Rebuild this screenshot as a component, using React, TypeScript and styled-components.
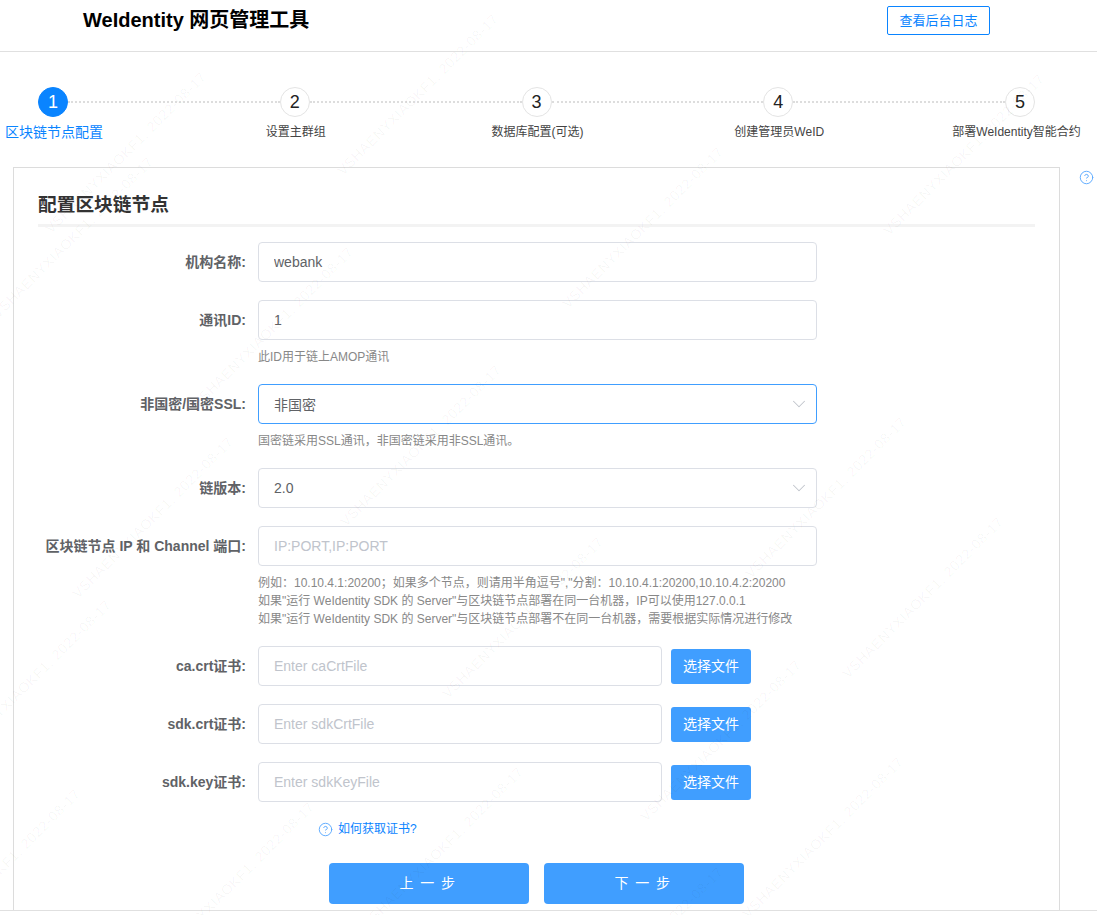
import { Fragment } from 'react';
import styled, { createGlobalStyle } from 'styled-components';
import { ChevronDown, CircleHelp } from 'lucide-react';

const GlobalStyle = createGlobalStyle`
  html, body {
    margin: 0;
    height: 100%;
    overflow: hidden;
    background: #ffffff;
    font-family: "Liberation Sans", "Noto Sans CJK SC", sans-serif;
  }
`

const Page = styled.div`
  position: relative;
  height: 915px;
  display: flex;
  flex-direction: column;
  overflow: hidden;
`

const Header = styled.header`
  display: flex;
  justify-content: space-between;
  align-items: flex-start;
  height: 45px;
  padding: 6px 107px 0 83px;
  border-bottom: 1px solid #e0e0e0;
`

const AppTitle = styled.h1`
  margin: 0;
  font-size: 20px;
  line-height: 29px;
  font-weight: bold;
  color: #000000;
`

const LogButton = styled.button`
  width: 103px;
  height: 29px;
  padding: 0 0 3px;
  font: inherit;
  font-size: 13px;
  color: #0a84ff;
  background: #ffffff;
  border: 1px solid #0a84ff;
  border-radius: 2px;
`

const StepTrack = styled.div`
  display: flex;
  align-items: flex-start;
  padding: 35px 62px 26px 38px;
`

const Step = styled.div`
  display: flex;
  flex-direction: column;
  align-items: center;
  width: 30px;
`

const StepCircle = styled.div<{ $active?: boolean }>`
  box-sizing: border-box;
  flex: none;
  width: 30px;
  height: 30px;
  display: flex;
  align-items: center;
  justify-content: center;
  border-radius: 50%;
  font-size: 18px;
  color: ${props => props.$active ? '#ffffff' : '#222222'};
  background: ${props => props.$active ? '#0a84ff' : '#ffffff'};
  border: 1px solid ${props => props.$active ? '#0a84ff' : '#e4e4e4'};
`

const StepLabel = styled.div<{ $active?: boolean; $last?: boolean }>`
  margin: 6px ${props => props.$last ? '7px' : '0'} 0 ${props => props.$last ? '0' : '2px'};
  font-size: ${props => props.$active ? '14px' : '12px'};
  line-height: 18px;
  white-space: nowrap;
  color: ${props => props.$active ? '#0a84ff' : '#444444'};
`

const Connector = styled.div`
  flex: 1;
  margin-top: 14px;
  border-top: 2px dotted #dddddd;
`

const Main = styled.div`
  display: flex;
  align-items: flex-start;
  gap: 19px;
  padding-left: 13px;
`

const Card = styled.section`
  box-sizing: border-box;
  width: 1047px;
  padding: 24px 24px 6px;
  border: 1px solid #dcdcdc;
  border-bottom: none;
`

const HelpSide = styled.div`
  display: flex;
  margin-top: 3px;
  color: #5aa9ff;
`

const CardTitle = styled.h2`
  margin: 0;
  padding-bottom: 6px;
  font-size: 18.72px;
  line-height: 26px;
  font-weight: bold;
  color: #333333;
  border-bottom: 3px solid #f3f3f3;
`

const Form = styled.form`
  margin-top: 15px;
`

const Row = styled.div`
  display: flex;
  margin-bottom: 18px;
`

const Label = styled.label`
  box-sizing: border-box;
  flex: none;
  width: 220px;
  padding-right: 12px;
  text-align: right;
  font-size: 14px;
  line-height: 40px;
  font-weight: bold;
  color: #606266;
  white-space: nowrap;
`

const Body = styled.div`
  width: 559px;
`

const InlineFields = styled.div`
  display: flex;
  align-items: flex-start;
`

const Field = styled.div<{ $focused?: boolean; $width?: number }>`
  box-sizing: border-box;
  display: flex;
  align-items: center;
  width: ${props => props.$width ?? 559}px;
  height: 40px;
  padding: 0 6px 0 15px;
  border: 1px solid ${props => props.$focused ? '#409eff' : '#dcdfe6'};
  border-radius: 4px;
  color: #c0c4cc;
`

const TextInput = styled.input`
  flex: 1;
  min-width: 0;
  padding: 0;
  border: none;
  outline: none;
  background: transparent;
  font: inherit;
  font-size: 14px;
  color: #606266;

  &::placeholder {
    color: #c0c4cc;
    opacity: 1;
  }
`

const Hint = styled.div`
  padding-top: 8px;
  font-size: 12px;
  line-height: 18px;
  color: #888888;
`

const FileButton = styled.button`
  flex: none;
  width: 80px;
  height: 35px;
  margin: 3px 0 0 9px;
  padding: 0 0 3px;
  font: inherit;
  font-size: 14px;
  color: #ffffff;
  background: #409eff;
  border: none;
  border-radius: 3px;
`

const HelpLink = styled.a`
  display: flex;
  align-items: center;
  gap: 5px;
  margin: 1px 0 0 280px;
  font-size: 12px;
  line-height: 18px;
  color: #0a84ff;

  svg {
    color: #5aa9ff;
  }
`

const Actions = styled.div`
  display: flex;
  justify-content: center;
  gap: 15px;
  margin-top: 25px;
`

const ActionButton = styled.button`
  width: 200px;
  height: 41px;
  padding: 0 2px 3px 0;
  font: inherit;
  font-size: 14px;
  letter-spacing: 1.4px;
  color: #ffffff;
  background: #409eff;
  border: none;
  border-radius: 4px;
`

const Footer = styled.div`
  flex: 1;
  border-top: 1px solid #e0e0e0;
`

const WatermarkLayer = styled.div`
  position: absolute;
  inset: 0;
  overflow: hidden;
  pointer-events: none;
`

// x / y are where the text ends, it runs up to there at 45deg
const WatermarkText = styled.span.attrs<{ $x: number; $y: number }>(props => ({
  style: { left: props.$x - 220, top: props.$y - 8 },
}))<{ $x: number; $y: number }>`
  position: absolute;
  width: 220px;
  text-align: right;
  font-size: 14px;
  line-height: 16px;
  letter-spacing: 0.6px;
  white-space: nowrap;
  color: rgba(0, 0, 0, 0.04);
  transform: rotate(-45deg);
  transform-origin: right center;
`

const WATERMARKS = [
  [150, 160], [203, 75], [495, 17], [1041, 77], [720, 150],
  [350, 250], [498, 368], [903, 420], [1000, 520],
  [108, 603], [311, 805], [77, 792], [230, 440], [798, 663], [600, 540],
  [520, 770], [720, 870], [900, 760],
]

const STEPS = ['区块链节点配置', '设置主群组', '数据库配置(可选)', '创建管理员WeID', '部署WeIdentity智能合约']

const CERTS = [
  { label: 'ca.crt证书:', placeholder: 'Enter caCrtFile' },
  { label: 'sdk.crt证书:', placeholder: 'Enter sdkCrtFile' },
  { label: 'sdk.key证书:', placeholder: 'Enter sdkKeyFile' },
]

export default function App() {
  return <Page>
    <GlobalStyle />
    <Header>
      <AppTitle>WeIdentity 网页管理工具</AppTitle>
      <LogButton type="button">查看后台日志</LogButton>
    </Header>

    <StepTrack>
      {STEPS.map((title, i) => <Fragment key={title}>
        {i > 0 && <Connector />}
        <Step>
          <StepCircle $active={i === 0}>{i + 1}</StepCircle>
          <StepLabel $active={i === 0} $last={i === STEPS.length - 1}>{title}</StepLabel>
        </Step>
      </Fragment>)}
    </StepTrack>

    <Main>
      <Card>
        <CardTitle>配置区块链节点</CardTitle>
        <Form>
          <Row>
            <Label>机构名称:</Label>
            <Body>
              <Field><TextInput readOnly value="webank" /></Field>
            </Body>
          </Row>
          <Row>
            <Label>通讯ID:</Label>
            <Body>
              <Field><TextInput readOnly value="1" /></Field>
              <Hint>此ID用于链上AMOP通讯</Hint>
            </Body>
          </Row>
          <Row>
            <Label>非国密/国密SSL:</Label>
            <Body>
              <Field $focused>
                <TextInput readOnly value="非国密" />
                <ChevronDown size={22} strokeWidth={1.1} />
              </Field>
              <Hint>国密链采用SSL通讯，非国密链采用非SSL通讯。</Hint>
            </Body>
          </Row>
          <Row>
            <Label>链版本:</Label>
            <Body>
              <Field>
                <TextInput readOnly value="2.0" />
                <ChevronDown size={22} strokeWidth={1.1} />
              </Field>
            </Body>
          </Row>
          <Row>
            <Label>区块链节点 IP 和 Channel 端口:</Label>
            <Body>
              <Field><TextInput readOnly placeholder="IP:PORT,IP:PORT" /></Field>
              <Hint>
                例如：10.10.4.1:20200；如果多个节点，则请用半角逗号","分割：10.10.4.1:20200,10.10.4.2:20200<br />
                如果"运行 WeIdentity SDK 的 Server"与区块链节点部署在同一台机器，IP可以使用127.0.0.1<br />
                如果"运行 WeIdentity SDK 的 Server"与区块链节点部署不在同一台机器，需要根据实际情况进行修改
              </Hint>
            </Body>
          </Row>
          {CERTS.map(cert => <Row key={cert.label}>
            <Label>{cert.label}</Label>
            <InlineFields>
              <Field $width={404}><TextInput readOnly placeholder={cert.placeholder} /></Field>
              <FileButton type="button">选择文件</FileButton>
            </InlineFields>
          </Row>)}
          <HelpLink>
            <CircleHelp size={15} strokeWidth={1.5} />
            如何获取证书?
          </HelpLink>
          <Actions>
            <ActionButton type="button">上 一 步</ActionButton>
            <ActionButton type="button">下 一 步</ActionButton>
          </Actions>
        </Form>
      </Card>
      <HelpSide><CircleHelp size={15} strokeWidth={1.5} /></HelpSide>
    </Main>
    <Footer />

    <WatermarkLayer>
      {WATERMARKS.map(([x, y]) => <WatermarkText key={`${x}-${y}`} $x={x} $y={y}>VSHAENYXIAOKF1, 2022-08-17</WatermarkText>)}
    </WatermarkLayer>
  </Page>
}
